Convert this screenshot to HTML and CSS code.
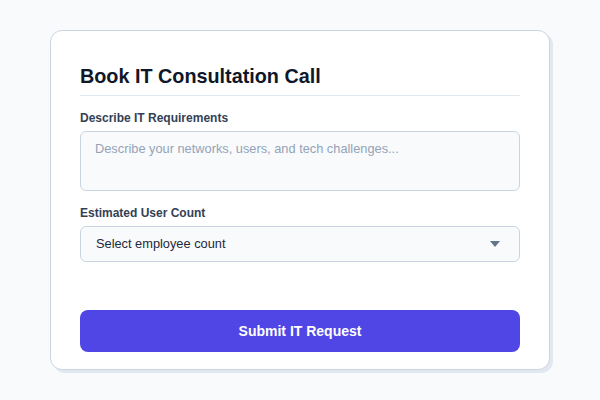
FILE: index.html
```html
<!DOCTYPE html>
<html>
<head>
<meta charset="utf-8">
<link rel="stylesheet" href="styles.css">
</head>
<body>
<div class="page">
  <form class="card">
    <h1 class="title">Book IT Consultation Call</h1>
    <div class="field">
      <label class="label">Describe IT Requirements</label>
      <div class="textarea">Describe your networks, users, and tech challenges...</div>
    </div>
    <div class="field">
      <label class="label">Estimated User Count</label>
      <div class="select">
        <span>Select employee count</span>
        <svg class="arrow" width="10" height="6" viewBox="0 0 10 6"><path d="M0 0H10L5 6Z" fill="#64748b"/></svg>
      </div>
    </div>
    <button type="button" class="submit">Submit IT Request</button>
  </form>
</div>
</body>
</html>
```
FILE: styles.css
```css
* { box-sizing: border-box; }
html, body { margin: 0; padding: 0; }
body {
  background: #f8fafc;
  font-family: "Liberation Sans", Arial, sans-serif;
  width: 600px;
  height: 400px;
}
.page {
  padding: 30px 50px;
}
.card {
  width: 500px;
  height: 340px;
  background: #ffffff;
  border: 1px solid #cbd5e1;
  border-radius: 12px;
  box-shadow: 3px 3px 0 #e2e8f0;
  padding: 29px 29px;
  display: flex;
  flex-direction: column;
}
.title {
  margin: 0;
  font-size: 19.8px;
  font-weight: 700;
  color: #0f172a;
  line-height: 24px;
  padding: 4px 0 7px;
  border-bottom: 1px solid #e2e8f0;
  flex-shrink: 0;
}
.field {
  display: flex;
  flex-direction: column;
  margin-top: 14px;
  flex-shrink: 0;
}
.label {
  font-size: 12px;
  font-weight: 700;
  color: #334155;
  line-height: 16px;
  margin-bottom: 5px;
}
.textarea {
  height: 60px;
  background: #f8fafc;
  border: 1px solid #cbd5e1;
  border-radius: 6px;
  padding: 9px 14px;
  font-size: 12.8px;
  line-height: 16px;
  color: #94a3b8;
}
.select {
  height: 36px;
  background: #f8fafc;
  border: 1px solid #cbd5e1;
  border-radius: 6px;
  padding: 0 19px 0 15px;
  font-size: 12.8px;
  color: #1e293b;
  display: flex;
  align-items: center;
  justify-content: space-between;
}
.select span { margin-top: -2px; }
.arrow { display: block; }
.submit {
  flex-shrink: 0;
  margin-top: 48px;
  height: 42px;
  border: none;
  border-radius: 8px;
  background: #4f46e5;
  color: #ffffff;
  font-family: "Liberation Sans", Arial, sans-serif;
  font-size: 14px;
  font-weight: 700;
}
```
